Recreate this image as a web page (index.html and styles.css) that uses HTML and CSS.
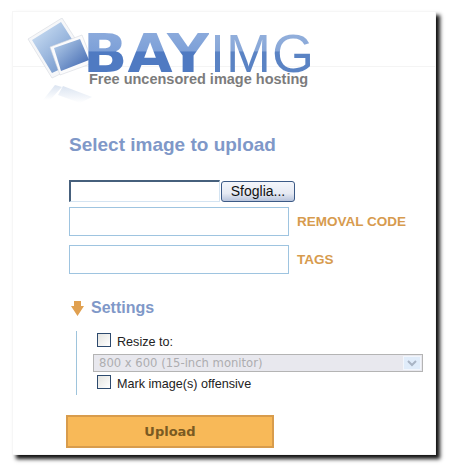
FILE: index.html
```html
<!DOCTYPE html>
<html lang="en">
<head>
    <meta charset="UTF-8">
    <meta name="viewport" content="width=device-width, initial-scale=1.0">
    <title>bayimg</title>
    <link rel="stylesheet" href="styles.css">
</head>
<body>
    <div class="window">
        <div class="header">
            <div class="logo">
                <svg class="logo-icon" width="80" height="98" viewBox="0 0 80 98">
                    <defs>
                        <linearGradient id="backPhoto" x1="0" y1="0" x2="1" y2="1">
                            <stop offset="0" stop-color="#d4e6f7"/>
                            <stop offset="1" stop-color="#5c84c2"/>
                        </linearGradient>
                        <linearGradient id="frontPhoto" x1="0" y1="0" x2="1" y2="1">
                            <stop offset="0" stop-color="#b9d2ec"/>
                            <stop offset="1" stop-color="#3a62ae"/>
                        </linearGradient>
                        <linearGradient id="reflect" x1="0" y1="0" x2="0" y2="1">
                            <stop offset="0" stop-color="#dbe4f1"/>
                            <stop offset="1" stop-color="#ffffff"/>
                        </linearGradient>
                    </defs>
                    <polygon points="16,82 28,67 35,69 23,82" fill="url(#reflect)"/>
                    <polygon points="36,68 65,79 53,85 31,77" fill="url(#reflect)"/>
                    <polygon points="1,21 35,0 62,42 25,60" fill="#f6f7f9" stroke="#d5d9df" stroke-width="0.6"/>
                    <polygon points="5,22 34,4 57,40 25,55" fill="url(#backPhoto)"/>
                    <polygon points="23,29 55,17 66,45 33,57" fill="#fbfbfc" stroke="#d5d9df" stroke-width="0.6"/>
                    <polygon points="27,30 53,21 62,42 34,53" fill="url(#frontPhoto)"/>
                </svg>
                <div class="logo-text">
                    <div class="logo-name"><span class="logo-bay">BAY</span><span class="logo-img">IMG</span></div>
                    <div class="logo-tag">Free uncensored image hosting</div>
                </div>
            </div>
        </div>

        <div class="content">
            <h1>Select image to upload</h1>

            <div class="file-row">
                <input type="text" class="file-path">
                <button class="browse">Sfoglia...</button>
            </div>
            <div class="field-row">
                <input type="text" class="field">
                <label>REMOVAL CODE</label>
            </div>
            <div class="field-row">
                <input type="text" class="field">
                <label>TAGS</label>
            </div>

            <div class="settings-title">
                <svg width="13" height="15" viewBox="0 0 13 15">
                    <polygon points="3,0 10,0 10,5 13,5 6.5,15 0,5 3,5" fill="#e0a050"/>
                </svg>
                <h2>Settings</h2>
            </div>
            <div class="settings">
                <div class="check-row">
                    <span class="checkbox"></span>
                    <span>Resize to:</span>
                </div>
                <div class="select">
                    <span>800 x 600 (15-inch monitor)</span>
                    <span class="select-arrow">
                        <svg width="10" height="7" viewBox="0 0 10 7">
                            <path d="M1 1 L5 5 L9 1" fill="none" stroke="#a9b4c4" stroke-width="2"/>
                        </svg>
                    </span>
                </div>
                <div class="check-row">
                    <span class="checkbox"></span>
                    <span>Mark image(s) offensive</span>
                </div>
            </div>

            <button class="upload">Upload</button>
        </div>
    </div>
</body>
</html>
```

FILE: styles.css
```css
body {
    box-sizing: border-box;
    height: 469px;
    margin: 0;
    padding: 11px 0 0 12px;
    background-color: #ffffff;
    font-family: "Liberation Sans", Arial, sans-serif;
}
.window {
    box-sizing: border-box;
    width: 424px;
    height: 444px;
    background-color: #ffffff;
    border: 1px solid #f6f6f6;
    box-shadow: 4px 4px 4px #111111;
}
.header {
    height: 54px;
    border-bottom: 1px solid #f4f4f4;
}
.logo {
    display: flex;
    margin-left: 14px;
    padding-top: 6px;
}
.logo-text {
    margin: 13px 0 0 -24px;
}
.logo-name {
    display: flex;
    height: 45px;
    line-height: 45px;
    font-size: 54px;
}
.logo-bay {
    font-family: "DejaVu Sans", Verdana, sans-serif;
    font-weight: bold;
    transform: scaleX(1.08);
    transform-origin: left;
    background: linear-gradient(#8cabdc 0, #7da0d8 45%, #4f7ac2 46%, #4f7ac2 100%);
    -webkit-background-clip: text;
    background-clip: text;
    color: transparent;
}
.logo-img {
    margin-left: 10px;
    letter-spacing: 1px;
    background: linear-gradient(#94b0dc 0, #87a7d8 45%, #5a83c4 46%, #5a83c4 100%);
    -webkit-background-clip: text;
    background-clip: text;
    color: transparent;
}
.logo-tag {
    margin: -5px 0 0 6px;
    font-size: 14.5px;
    line-height: 16px;
    font-weight: bold;
    color: #7c7c7c;
    white-space: nowrap;
}
.content {
    padding: 68px 0 0 56px;
}
h1 {
    margin: 0;
    font-size: 19px;
    line-height: 20px;
    color: #7f98c8;
}
.file-row {
    display: flex;
    align-items: center;
    gap: 1px;
    margin-top: 25px;
}
.file-path {
    box-sizing: border-box;
    width: 151px;
    height: 22px;
    margin: 0;
    border: 1px solid #d4e4f2;
    border-top: 2px solid #46607c;
    border-left: 2px solid #46607c;
    outline: none;
}
.browse {
    box-sizing: border-box;
    width: 74px;
    height: 21px;
    padding: 0;
    font-family: "Liberation Sans", Arial, sans-serif;
    font-size: 14px;
    color: #111111;
    border: 1px solid #3c5a86;
    border-radius: 3px;
    background: linear-gradient(#f4f6fb, #e6eaf3 60%, #b8c4dc);
}
.field-row {
    display: flex;
    align-items: center;
    gap: 8px;
    margin-top: 5px;
}
.field-row + .field-row {
    margin-top: 9px;
}
.field {
    box-sizing: border-box;
    width: 220px;
    height: 29px;
    margin: 0;
    border: 1px solid #9ec4e0;
    outline: none;
}
label {
    font-size: 13.5px;
    font-weight: bold;
    color: #d79b4e;
}
.settings-title {
    display: flex;
    align-items: center;
    gap: 7px;
    margin: 25px 0 0 2px;
}
h2 {
    margin: 0;
    font-size: 16px;
    line-height: 18px;
    color: #7f98c8;
}
.settings {
    box-sizing: border-box;
    height: 64px;
    margin: 14px 0 0 7px;
    padding: 2px 0 0 16px;
    border-left: 1px solid #9ec4dc;
}
.check-row {
    display: flex;
    align-items: center;
    gap: 6px;
    height: 14px;
    margin-left: 4px;
    font-size: 12.6px;
    color: #222222;
}
.check-row span:last-child {
    position: relative;
    top: 2px;
}
.checkbox {
    box-sizing: border-box;
    width: 14px;
    height: 14px;
    border: 1px solid #2d4a6e;
    background: linear-gradient(135deg, #e4e4e0, #ffffff);
}
.select {
    box-sizing: border-box;
    display: flex;
    align-items: center;
    justify-content: space-between;
    width: 330px;
    height: 18px;
    margin: 7px 0 3px;
    padding: 0 1px 0 5px;
    background-color: #e8e8ee;
    border: 1px solid #b4b4b4;
    font-family: "DejaVu Sans", Verdana, sans-serif;
    font-size: 11.6px;
    color: #adadb0;
}
.select-arrow {
    display: flex;
    align-items: center;
    justify-content: center;
    width: 18px;
    height: 14px;
    background-color: #e0ecfa;
    border: 1px solid #f2f6fc;
    box-sizing: border-box;
}
.upload {
    display: block;
    box-sizing: border-box;
    width: 208px;
    height: 33px;
    margin: 20px 0 0 -3px;
    padding: 0;
    background-color: #f8b958;
    border: 2px solid #d89c4c;
    font-family: "DejaVu Sans", Verdana, sans-serif;
    font-size: 13px;
    font-weight: bold;
    color: #7a5a22;
}
```
